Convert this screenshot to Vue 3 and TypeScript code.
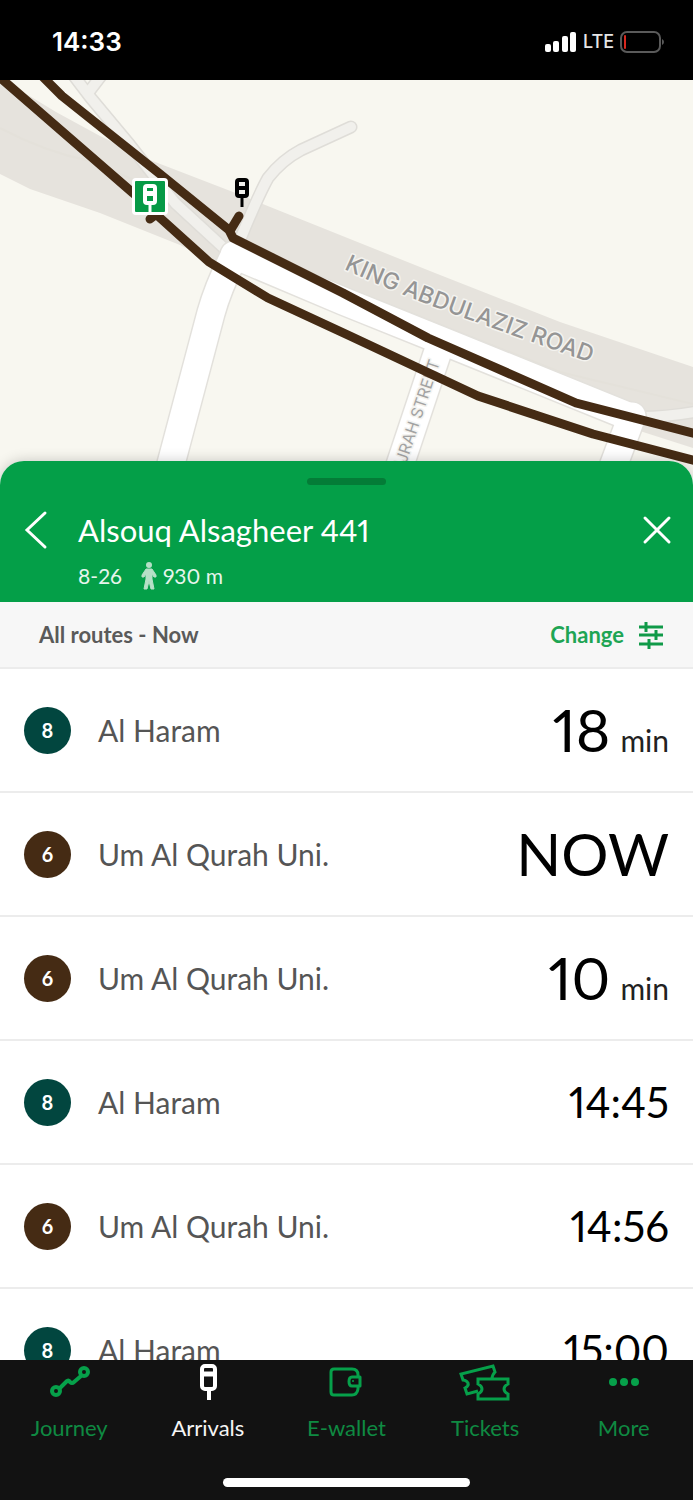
<script setup lang="ts">
interface Arrival {
  id: number
  route: string
  line: 'teal' | 'brown'
  destination: string
  value: string
  unit?: string
  large?: boolean
}

const arrivals: Arrival[] = [
  { id: 1, route: '8', line: 'teal', destination: 'Al Haram', value: '18', unit: 'min', large: true },
  { id: 2, route: '6', line: 'brown', destination: 'Um Al Qurah Uni.', value: 'NOW', large: true },
  { id: 3, route: '6', line: 'brown', destination: 'Um Al Qurah Uni.', value: '10', unit: 'min', large: true },
  { id: 4, route: '8', line: 'teal', destination: 'Al Haram', value: '14:45' },
  { id: 5, route: '6', line: 'brown', destination: 'Um Al Qurah Uni.', value: '14:56' },
  { id: 6, route: '8', line: 'teal', destination: 'Al Haram', value: '15:00' },
]

const roads = {
  lane: 'M74 76 L90 97 L130 145 L175 203 L226 250',
  laneFork: 'M101 76 L88 93',
  curve: 'M351 127 L301 150 Q282 160 268 178 Q258 196 240 240',
  rightLane: 'M640 417 Q668 417 700 411',
  main: 'M234 255 L343 301 L460 348 L628 416',
  west: 'M232 260 Q218 288 211 313 L168 475',
  hijrah: 'M440 345 L395 480',
  east: 'M632 416 L608 480',
}
const whiteRoads = [roads.main, roads.west, roads.hijrah, roads.east]
const paleRoads = [roads.lane, roads.laneFork, roads.curve, roads.rightLane]
</script>

<template>
  <div class="screen">
    <header class="status">
      <span class="clock">14:33</span>
      <div class="signals">
        <svg class="bars" viewBox="0 0 32 20" aria-hidden="true">
          <rect x="0" y="12" width="6" height="8" rx="2" />
          <rect x="8" y="9" width="6" height="11" rx="2" />
          <rect x="17" y="4" width="6" height="16" rx="2" />
          <rect x="25" y="0" width="6" height="20" rx="2" />
        </svg>
        <span class="network">LTE</span>
        <svg class="battery" viewBox="0 0 44 22" aria-hidden="true">
          <rect x="1" y="1" width="39" height="20" rx="6" fill="none" stroke="#5a5a5a" stroke-width="2" />
          <rect x="4" y="4" width="2" height="14" rx="1" fill="#d8281f" />
          <path d="M42 8 Q44 9 44 11 Q44 13 42 14 Z" fill="#5a5a5a" />
        </svg>
      </div>
    </header>

    <main class="content">
      <svg class="map" viewBox="0 80 693 402" preserveAspectRatio="xMidYMin slice" role="img" aria-label="Map of King Abdulaziz Road">
        <defs>
          <path id="kingRoad" d="M344 269 Q400 295 470 320 T620 373" />
          <path id="hijrahStreet" d="M389 516 L440 362" />
        </defs>
        <rect x="0" y="80" width="693" height="402" fill="#f8f7f0" />
        <path
          d="M0 78 L56 112 L100 136 L150 160 L233 192 L350 239 L435 273 L560 322 L693 367 L693 448 L643 432 L560 400 L215 263 L180 245 L100 213 L30 189 L0 174 Z"
          fill="#e6e3dd"
        />
        <path d="M0 128 Q45 152 90 161 L190 204 M340 285 L560 372 L693 404" fill="none" stroke="#e4e1da" stroke-width="2" />
        <path d="M215 265 L343 316 L613 428 L600 440 L343 335 L268 298 Z" fill="#f8f7f0" />

        <g fill="none" stroke-linecap="round" stroke-linejoin="round">
          <path v-for="d in paleRoads" :key="'edge' + d" :d="d" stroke="#dfddd8" stroke-width="13" />
          <path v-for="d in paleRoads" :key="d" :d="d" stroke="#f1f0ec" stroke-width="10" />
        </g>
        <g fill="none" stroke-linecap="round" stroke-linejoin="round">
          <path v-for="d in whiteRoads" :key="'edge' + d" :d="d" stroke="#e3e1dc" stroke-width="30" />
          <path v-for="d in whiteRoads" :key="d" :d="d" stroke="#ffffff" stroke-width="27" />
        </g>

        <text class="road-name road-small"><textPath href="#hijrahStreet" startOffset="100%" text-anchor="end">HIJRAH STREET</textPath></text>
        <text class="road-name road-large"><textPath href="#kingRoad">KING ABDULAZIZ ROAD</textPath></text>

        <g fill="none" stroke="#452b14" stroke-width="9" stroke-linejoin="round" stroke-linecap="round">
          <path d="M-4 74 L133 193 L158 216 L209 262 L268 298 L350 336 L478 396 L593 434 L700 462" />
          <path d="M38 72 L62 96 L160 174 L229 230 L233 238 L343 293 L428 338 L576 403 L700 435" />
          <path d="M230 231 L239 216" />
          <path d="M150 219 L154 216" />
        </g>

        <g>
          <rect x="132" y="178" width="36" height="37" rx="4" fill="#ffffff" />
          <rect x="135" y="181" width="30" height="31" rx="1" fill="#069a46" />
          <rect x="143" y="184" width="14" height="21" rx="4" fill="#ffffff" />
          <path d="M147 188 H153 V191 H147 Z M147 196 H153 V201 H147 Z" fill="#069a46" />
          <path d="M150 204 V213" stroke="#ffffff" stroke-width="3" />
        </g>
        <g>
          <rect x="235" y="178" width="14" height="20" rx="4" fill="#000000" />
          <path d="M239 182 H245 V186 H239 Z M239 190 H245 V194 H239 Z" fill="#f1f0ec" />
          <path d="M242 197 V207" stroke="#000000" stroke-width="3" />
        </g>
      </svg>

      <section class="sheet">
        <div class="stop-header">
          <div class="handle"></div>
          <div class="title-row">
            <button class="icon-button back" type="button" aria-label="Back">
              <svg width="24" height="40" viewBox="0 0 24 40"><path d="M21 3 L3 20 L21 37" /></svg>
            </button>
            <h1>Alsouq Alsagheer 441</h1>
            <button class="icon-button close" type="button" aria-label="Close">
              <svg width="30" height="30" viewBox="0 0 30 30"><path d="M3 3 L27 27 M27 3 L3 27" /></svg>
            </button>
          </div>
          <div class="stop-meta">
            <span>8-26</span>
            <span class="distance">
              <svg width="16" height="28" viewBox="0 0 16 28" aria-hidden="true">
                <circle cx="8" cy="3" r="3" fill="#b5e0c6" />
                <path d="M5 7 H11 L15 13 V15 H13 L11 12 V17 L13 27 H10 L8 19 L6 27 H3 L5 17 V12 L3 15 H1 V13 Z" fill="#b5e0c6" stroke="#b5e0c6" stroke-linejoin="round" />
              </svg>
              <span>930 m</span>
            </span>
          </div>
        </div>

        <div class="filter">
          <span class="filter-label">All routes - Now</span>
          <button class="change" type="button">
            <span>Change</span>
            <svg width="24" height="28" viewBox="0 0 24 28" aria-hidden="true">
              <path d="M0 6 H24 M0 14 H24 M0 23 H24 M7 1 V11 M17 9 V19 M10 18 V28" fill="none" stroke="#109a48" stroke-width="3" />
            </svg>
          </button>
        </div>

        <ul class="arrivals">
          <li v-for="item in arrivals" :key="item.id" class="arrival">
            <span class="badge" :class="item.line">{{ item.route }}</span>
            <span class="destination">{{ item.destination }}</span>
            <span class="time" :class="{ large: item.large }">{{ item.value }}<span v-if="item.unit" class="unit">{{ item.unit }}</span></span>
          </li>
        </ul>
      </section>
    </main>

    <footer class="bottom">
      <nav class="tabs">
        <a href="#journey">
          <svg width="42" height="36" viewBox="0 0 42 36" aria-hidden="true" fill="none" stroke="#06a04a" stroke-width="4" stroke-linecap="round" stroke-linejoin="round">
            <circle cx="8" cy="27" r="4" /><circle cx="36" cy="8" r="4" />
            <path d="M12 24 L19 17 Q21 16 22 18 Q24 20 26 18 L33 12" />
          </svg>
          <span>Journey</span>
        </a>
        <a href="#arrivals" class="active" aria-current="page">
          <svg width="42" height="36" viewBox="0 0 42 36" aria-hidden="true">
            <rect x="15" y="2" width="13" height="23" rx="3" fill="none" stroke="#ffffff" stroke-width="4" />
            <path d="M17 10 H26" stroke="#ffffff" stroke-width="5" />
            <path d="M22 26 V36" stroke="#ffffff" stroke-width="4" />
          </svg>
          <span>Arrivals</span>
        </a>
        <a href="#wallet">
          <svg width="42" height="36" viewBox="0 0 42 36" aria-hidden="true" fill="none" stroke="#06a04a" stroke-width="3" stroke-linejoin="round">
            <path d="M33 13 V11 Q33 5 27 5 H9 Q6 5 6 8 V28 Q6 31 9 31 H27 Q32 31 33 25 V22" />
            <path d="M35 13 H27 Q24 13 24 17.5 Q24 22 27 22 H35 Z" />
            <circle cx="28" cy="17" r="1" fill="#06a04a" stroke="none" />
          </svg>
          <span>E-wallet</span>
        </a>
        <a href="#tickets">
          <svg width="52" height="36" viewBox="0 0 52 36" aria-hidden="true" fill="none" stroke="#06a04a" stroke-width="3">
            <path d="M19 27 L8 30 L6 24 Q10 22 9 19 Q7 16 4 16 L2 10 L34 2 L36 8 Q33 11 33 15" />
            <path d="M19 15 H49 V20 Q45 22 45 25 Q45 28 49 30 V35 H19 V30 Q23 28 23 25 Q23 22 19 20 Z" />
          </svg>
          <span>Tickets</span>
        </a>
        <a href="#more">
          <svg width="42" height="36" viewBox="0 0 42 36" aria-hidden="true" fill="#06a04a">
            <circle cx="10" cy="18" r="4" /><circle cx="21" cy="18" r="4" /><circle cx="32" cy="18" r="4" />
          </svg>
          <span>More</span>
        </a>
      </nav>
      <div class="home-indicator"></div>
    </footer>
  </div>
</template>

<style>
body {
  margin: 0;
  background: #121212;
}
</style>

<style scoped>
.screen {
  display: flex;
  flex-direction: column;
  height: 100vh;
  overflow: hidden;
  background: #ffffff;
  font-family: Lato, "Open Sans", sans-serif;
  font-variant-numeric: proportional-nums;
}

.status {
  display: flex;
  flex: none;
  align-items: center;
  justify-content: space-between;
  box-sizing: border-box;
  height: 80px;
  padding: 4px 29px 0 52px;
  background: #000000;
  color: #ffffff;
  font-family: Inter, sans-serif;
}

.clock {
  font-size: 26px;
  font-weight: 600;
  line-height: 32px;
}

.signals {
  display: flex;
  align-items: center;
  gap: 6px;
}

.bars {
  width: 32px;
  height: 20px;
  fill: #ffffff;
}

.network {
  font-size: 18px;
  font-weight: 500;
  line-height: 24px;
  color: #e6e6e6;
}

.battery {
  width: 44px;
  height: 22px;
}

.content {
  display: flex;
  flex: 1;
  flex-direction: column;
  min-height: 0;
  overflow: hidden;
}

.map {
  display: block;
  flex: none;
  width: 100%;
  height: 402px;
}

.road-name {
  font-family: Inter, sans-serif;
  paint-order: stroke;
  stroke: #f4f3ef;
  stroke-width: 3px;
  stroke-linejoin: round;
}

.road-large {
  font-size: 23px;
  font-weight: 500;
  fill: #959595;
}

.road-small {
  font-size: 16px;
  fill: #a3a3a3;
}

.sheet {
  position: relative;
  display: flex;
  flex: none;
  flex-direction: column;
  margin-top: -21px;
  border-radius: 24px 24px 0 0;
  background: #ffffff;
  box-shadow: 0 0 14px rgba(0, 0, 0, 0.2);
}

.stop-header {
  padding: 17px 20px 12px;
  border-radius: 24px 24px 0 0;
  background: #049f48;
  color: #ffffff;
}

.handle {
  width: 79px;
  height: 7px;
  margin: 0 auto 21px;
  border-radius: 4px;
  background: #047c37;
}

.title-row {
  display: flex;
  align-items: center;
  height: 48px;
}

.icon-button {
  display: flex;
  padding: 4px;
  border: 0;
  background: none;
  cursor: pointer;
}

.icon-button svg {
  fill: none;
  stroke: #ffffff;
  stroke-width: 3px;
  stroke-linecap: round;
}

.back {
  width: 58px;
}

.close {
  padding: 0 1px 0 0;
}

h1 {
  flex: 1;
  margin: 0;
  font-size: 31px;
  font-weight: 400;
  line-height: 40px;
}

.stop-meta {
  display: flex;
  align-items: center;
  gap: 19px;
  height: 28px;
  margin: 8px 0 0 58px;
  font-size: 21px;
  line-height: 28px;
  color: #e6f5ec;
}

.distance {
  display: flex;
  align-items: center;
  gap: 6px;
}

.filter {
  display: flex;
  align-items: center;
  justify-content: space-between;
  box-sizing: border-box;
  height: 67px;
  padding: 0 30px 0 39px;
  border-bottom: 2px solid #ececec;
  background: #f7f7f7;
  font-size: 22px;
  font-weight: 700;
  line-height: 28px;
}

.filter-label {
  color: #5a5a5a;
}

.change {
  display: flex;
  align-items: center;
  gap: 15px;
  padding: 0;
  border: 0;
  background: none;
  color: #1ea554;
  font: inherit;
  cursor: pointer;
}

.arrivals {
  margin: 0;
  padding: 0;
  list-style: none;
}

.arrival {
  display: flex;
  align-items: center;
  box-sizing: border-box;
  height: 124px;
  padding: 0 24px;
  border-bottom: 2px solid #ececec;
}

.badge {
  display: flex;
  flex: none;
  align-items: center;
  justify-content: center;
  width: 47px;
  height: 47px;
  border-radius: 50%;
  color: #ffffff;
  font-size: 20px;
  font-weight: 700;
}

.badge.teal {
  background: #02463f;
}

.badge.brown {
  background: #452b14;
}

.destination {
  flex: 1;
  margin-left: 27px;
  font-size: 30px;
  line-height: 40px;
  color: #555555;
}

.time {
  font-size: 42px;
  line-height: 60px;
  color: #000000;
}

.time.large {
  font-size: 59px;
}

.unit {
  margin-left: 10px;
  font-size: 30px;
  line-height: 30px;
  color: #222222;
}

.bottom {
  position: relative;
  flex: none;
  box-sizing: border-box;
  height: 140px;
  padding-top: 4px;
  background: #121212;
}

.tabs {
  display: grid;
  grid-template-columns: repeat(5, 1fr);
}

.tabs a {
  display: flex;
  flex-direction: column;
  align-items: center;
  gap: 14px;
  color: #0f8a42;
  font-size: 22px;
  line-height: 28px;
  text-decoration: none;
}

.tabs svg {
  overflow: visible;
}

.tabs a.active {
  color: #f5f5f5;
}

.home-indicator {
  width: 247px;
  height: 9px;
  margin: 36px auto 0;
  border-radius: 5px;
  background: #ffffff;
}
</style>
